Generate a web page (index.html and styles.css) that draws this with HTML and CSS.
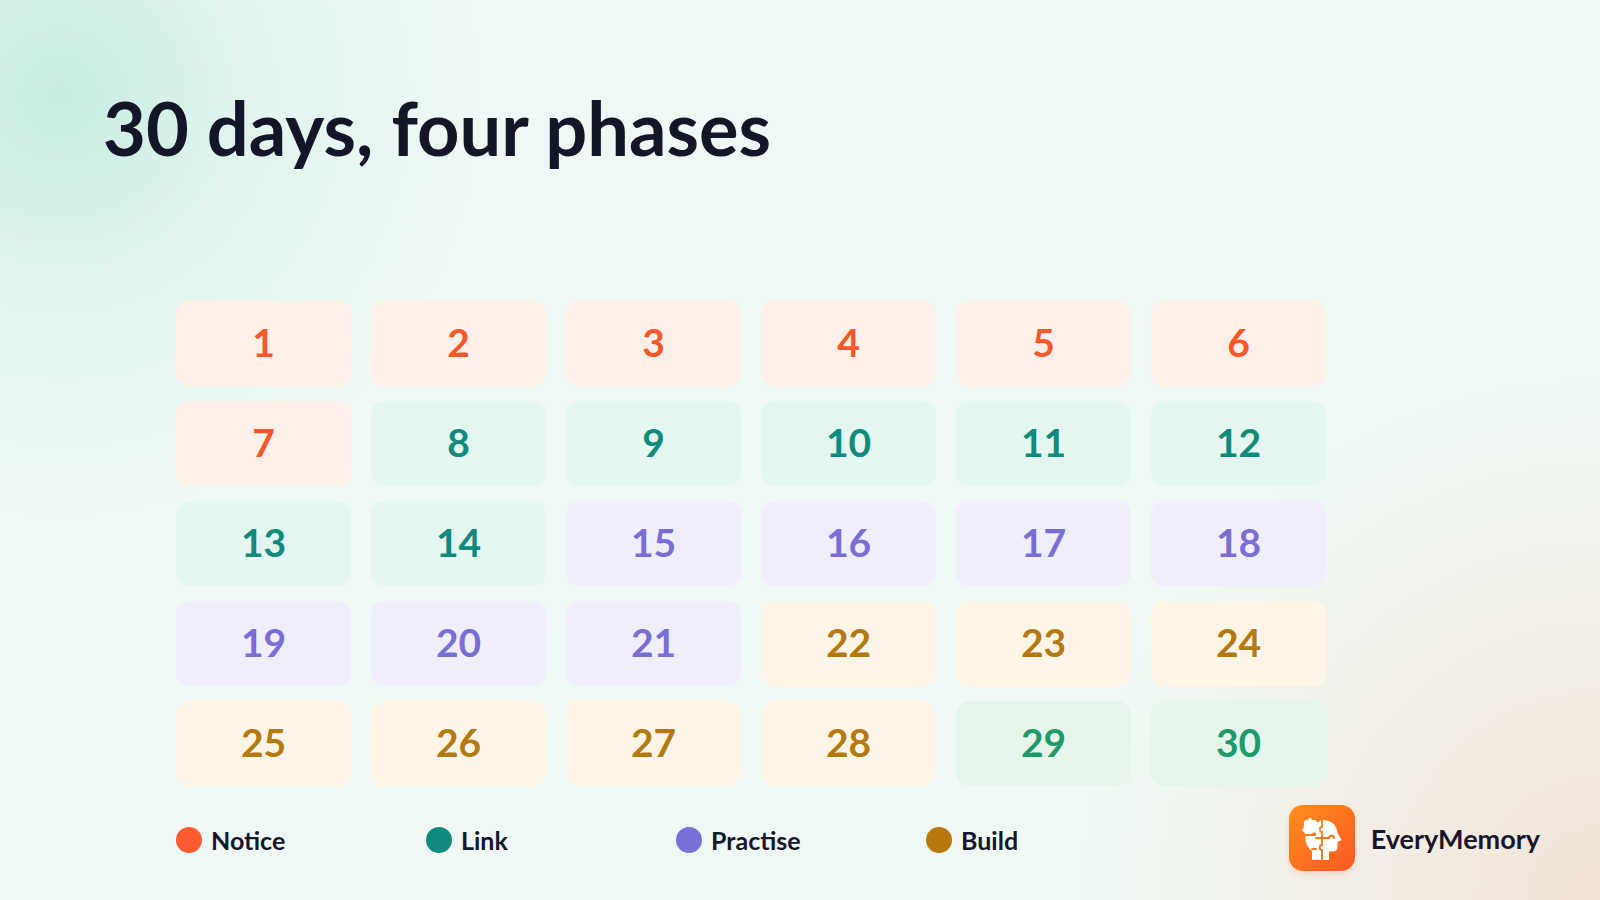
FILE: index.html
```html
<!DOCTYPE html>
<html lang="en">
<head>
<meta charset="utf-8">
<title>30 days, four phases</title>
<link rel="stylesheet" href="styles.css">
</head>
<body>
<div class="slide">
  <h1 class="title">30 days, four phases</h1>
  <div class="grid">
    <div class="cell notice">1</div>
    <div class="cell notice">2</div>
    <div class="cell notice">3</div>
    <div class="cell notice">4</div>
    <div class="cell notice">5</div>
    <div class="cell notice">6</div>
    <div class="cell notice">7</div>
    <div class="cell link">8</div>
    <div class="cell link">9</div>
    <div class="cell link">10</div>
    <div class="cell link">11</div>
    <div class="cell link">12</div>
    <div class="cell link">13</div>
    <div class="cell link">14</div>
    <div class="cell practise">15</div>
    <div class="cell practise">16</div>
    <div class="cell practise">17</div>
    <div class="cell practise">18</div>
    <div class="cell practise">19</div>
    <div class="cell practise">20</div>
    <div class="cell practise">21</div>
    <div class="cell build">22</div>
    <div class="cell build">23</div>
    <div class="cell build">24</div>
    <div class="cell build">25</div>
    <div class="cell build">26</div>
    <div class="cell build">27</div>
    <div class="cell build">28</div>
    <div class="cell final">29</div>
    <div class="cell final">30</div>
  </div>
  <div class="footer">
    <div class="legend">
      <div class="legend-item"><span class="dot dot-notice"></span><span>Notice</span></div>
      <div class="legend-item"><span class="dot dot-link"></span><span>Link</span></div>
      <div class="legend-item"><span class="dot dot-practise"></span><span>Practise</span></div>
      <div class="legend-item"><span class="dot dot-build"></span><span>Build</span></div>
    </div>
    <div class="brand">
      <div class="brand-logo">
        <svg viewBox="0 0 66 66" width="66" height="66" aria-hidden="true">
          <defs>
            <linearGradient id="lg" x1="0" y1="0" x2="1" y2="1">
              <stop offset="0" stop-color="#ff8f1c"/>
              <stop offset="1" stop-color="#ff5722"/>
            </linearGradient>
          </defs>
          <rect x="0" y="0" width="66" height="66" rx="14" fill="url(#lg)"/>
          <path d="M23 55 L23 46 C18 42 16 37 16.5 31 L27 31 L27 22 C28 17 31 15 34 15 C42 15 48 20 48.5 28 L52.5 35 L48.5 37 L48.5 42 C48.5 45 46.5 46.5 43.5 46.5 L40 46.5 L40 55 Z" fill="#fff"/>
          <path d="M33 15 L33 22 C30 22 30 27 33 27 L33 33 L27 33 M33 33 L40 33 C40 30 45 30 45 33 M33 33 L33 40 C30 40 30 45 33 45 L33 55 M23 44 L27 44" fill="none" stroke="url(#lg)" stroke-width="1.8" stroke-linecap="round"/>
          <path d="M15 18 C15 15 17 14 19 15 C19 12 23 12 23 15 L27 15 C27 18 31 18 31 21 C28 21 28 25 31 25 L27 29 C27 27 23 27 23 29 L16 29 C16 27 13 27 13 24 C15 24 15 21 15 18 Z" fill="#fff"/>
        </svg>
      </div>
      <span class="brand-name">EveryMemory</span>
    </div>
  </div>
</div>
</body>
</html>
```
FILE: styles.css
```css
html, body {
  margin: 0;
  padding: 0;
}

body {
  width: 1600px;
  height: 900px;
  overflow: hidden;
  font-family: "Lato", "Open Sans", "Noto Sans", sans-serif;
  color: #16162a;
  background:
    radial-gradient(circle at 60px 95px, rgba(196, 236, 224, 0.95) 0, rgba(214, 242, 233, 0.6) 180px, rgba(239, 248, 244, 0) 420px),
    radial-gradient(circle at 1600px 900px, rgba(243, 228, 216, 1) 0, rgba(243, 232, 222, 0.7) 220px, rgba(239, 248, 244, 0) 520px),
    #eff8f4;
}

.slide {
  box-sizing: border-box;
  width: 1600px;
  height: 900px;
  padding: 90px 60px 0 103px;
  display: flex;
  flex-direction: column;
}

.title {
  margin: 0;
  font-size: 74px;
  line-height: 75px;
  font-weight: 700;
  color: #151528;
}

.grid {
  margin: 136px 0 0 73px;
  display: grid;
  grid-template-columns: repeat(6, 175px);
  grid-auto-rows: 85px;
  column-gap: 20px;
  row-gap: 15px;
}

.cell {
  border-radius: 13px;
  display: flex;
  align-items: center;
  justify-content: center;
  padding-bottom: 4px;
  box-sizing: border-box;
  font-size: 39px;
  font-weight: 700;
}

.notice { background: #ffefe9; color: #f4592c; }
.link { background: #e4f6f0; color: #0f8a7c; }
.practise { background: #efeefa; color: #7a6ed6; }
.build { background: #fff5e7; color: #b27a10; }
.final { background: #e5f5ec; color: #1f9a6a; }

.footer {
  margin-top: 19px;
  height: 66px;
  display: flex;
  align-items: center;
}

.legend {
  margin-left: 73px;
  margin-top: 4px;
  display: flex;
}

.legend-item {
  width: 250px;
  display: flex;
  align-items: center;
  gap: 9px;
  font-size: 25px;
  font-weight: 700;
  color: #16162a;
}

.dot {
  width: 26px;
  height: 26px;
  border-radius: 50%;
  flex: none;
}

.dot-notice { background: #ff5a30; }
.dot-link { background: #0f8a7c; }
.dot-practise { background: #7b6fd8; }
.dot-build { background: #b8790c; }

.brand {
  margin-left: auto;
  display: flex;
  align-items: center;
  gap: 16px;
}

.brand-logo {
  width: 66px;
  height: 66px;
  border-radius: 14px;
  box-shadow: 0 2px 6px rgba(255, 100, 30, 0.18);
}

.brand-logo svg {
  display: block;
}

.brand-name {
  font-size: 27px;
  font-weight: 700;
  color: #17172b;
}
```
